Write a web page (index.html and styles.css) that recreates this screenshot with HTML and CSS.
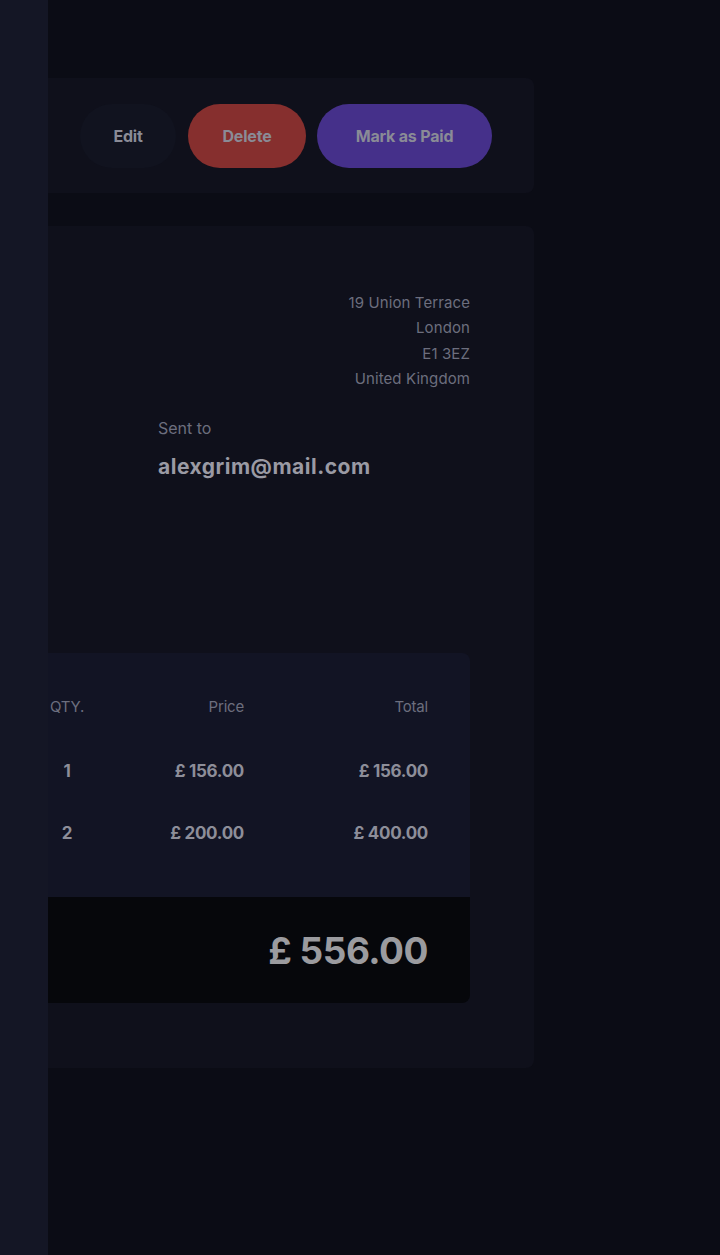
FILE: index.html
```html
<!DOCTYPE html>
<html lang="en">
<head>
<meta charset="utf-8">
<title>Invoice</title>
<link rel="stylesheet" href="styles.css">
</head>
<body>
<aside class="sidebar"></aside>
<main class="main">
  <section class="actions">
    <button class="btn btn-edit">Edit</button>
    <button class="btn btn-delete">Delete</button>
    <button class="btn btn-paid">Mark as Paid</button>
  </section>
  <section class="card">
    <address class="sender">
      <span>19 Union Terrace</span>
      <span>London</span>
      <span>E1 3EZ</span>
      <span>United Kingdom</span>
    </address>
    <div class="sent">
      <p class="label">Sent to</p>
      <p class="email">alexgrim@mail.com</p>
    </div>
    <div class="items">
      <div class="row head">
        <span class="qty">QTY.</span>
        <span class="num">Price</span>
        <span class="num">Total</span>
      </div>
      <div class="row item">
        <span class="qty">1</span>
        <span class="num">£ 156.00</span>
        <span class="num">£ 156.00</span>
      </div>
      <div class="row item">
        <span class="qty">2</span>
        <span class="num">£ 200.00</span>
        <span class="num">£ 400.00</span>
      </div>
    </div>
    <div class="total">
      <span class="amount">£ 556.00</span>
    </div>
  </section>
</main>
</body>
</html>
```
FILE: styles.css
```css
* { box-sizing: border-box; }
html, body { margin: 0; padding: 0; }
body {
  background: #0b0c15;
  font-family: "Inter", "Lato", sans-serif;
  display: flex;
  min-height: 1255px;
  height: 1255px;
  overflow: hidden;
}
.sidebar {
  width: 48px;
  flex-shrink: 0;
  background: #141625;
}
.main {
  width: 486px;
  padding-top: 78px;
}
.actions {
  height: 115px;
  background: #0f101b;
  border-radius: 0 8px 8px 0;
  display: flex;
  align-items: center;
  padding-left: 32px;
  gap: 12px;
}
.btn {
  height: 64px;
  border: none;
  border-radius: 32px;
  font-family: inherit;
  font-weight: 700;
  font-size: 16px;
  letter-spacing: -0.2px;
  color: #8a8b96;
  padding: 0;
}
.btn-edit { width: 96px; background: #11131f; }
.btn-delete { width: 118px; background: #862f2e; }
.btn-paid { width: 175px; background: #45308a; margin-left: -1px; }

.card {
  margin-top: 33px;
  height: 842px;
  background: #0f101b;
  border-radius: 0 8px 8px 0;
  display: flex;
  flex-direction: column;
}
.sender {
  font-style: normal;
  display: flex;
  flex-direction: column;
  align-items: flex-end;
  padding: 64px 64px 0 0;
  font-size: 15px;
  line-height: 25.3px;
  color: #6c6e7e;
  letter-spacing: 0.1px;
}
.sent {
  padding-left: 110px;
  margin-top: 27px;
}
.sent p { margin: 0; }
.label {
  font-size: 16px;
  line-height: 20px;
  color: #6c6e7e;
  letter-spacing: 0;
}
.email {
  margin-top: 17px !important;
  font-size: 21px;
  line-height: 24px;
  font-weight: 700;
  color: #9a9aa4;
  letter-spacing: 0.5px;
}
.items {
  margin-top: 174px;
  width: 422px;
  background: #121424;
  border-radius: 0 8px 0 0;
  padding: 40px 0 0 0;
  height: 244px;
}
.row {
  display: grid;
  grid-template-columns: 38px 158px 184px;
  padding-right: 42px;
  align-items: center;
}
.head {
  font-size: 15px;
  color: #6c6e7e;
  height: 26px;
  letter-spacing: -0.2px;
}
.item {
  font-size: 17px;
  font-weight: 700;
  color: #8d8e99;
  height: 26px;
  letter-spacing: -0.3px;
}
.head + .item { margin-top: 39px; }
.item + .item { margin-top: 36px; }
.qty { text-align: center; padding-left: 0; }
.num { text-align: right; }
.total {
  width: 422px;
  height: 106px;
  background: #06070b;
  border-radius: 0 0 8px 0;
  display: flex;
  align-items: center;
  justify-content: flex-end;
  padding-right: 42px;
}
.amount {
  font-size: 37px;
  font-weight: 700;
  color: #9b9b9f;
  letter-spacing: -0.5px;
}
```
